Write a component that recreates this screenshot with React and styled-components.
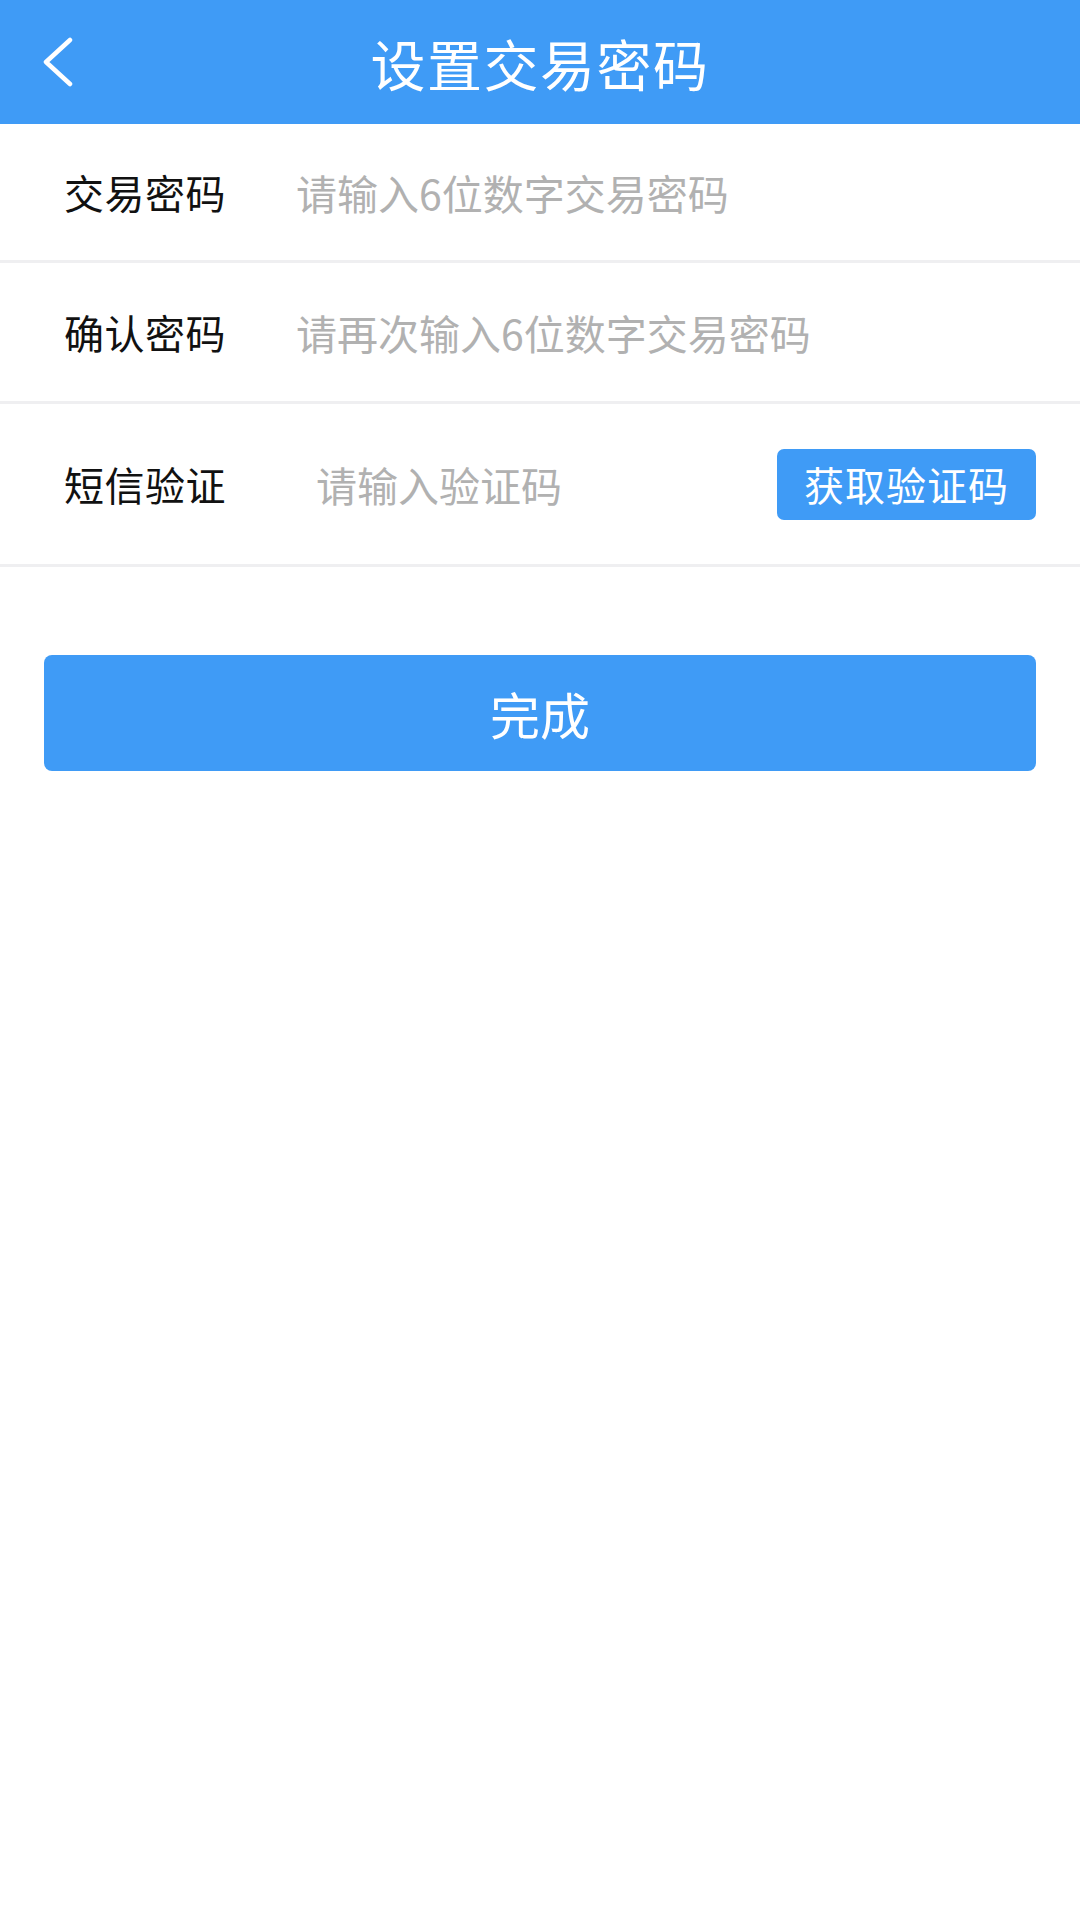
import React from "react";
import styled, { createGlobalStyle } from "styled-components";

const Global = createGlobalStyle`
  html, body { margin: 0; padding: 0; background: #ffffff; }
  body { font-family: "Noto Sans CJK SC", "Noto Sans", sans-serif; }
  * { box-sizing: border-box; }
`;

const Page = styled.div`
  width: 1080px;
  min-height: 1920px;
  background: #ffffff;
  display: flex;
  flex-direction: column;
`;

const Header = styled.header`
  height: 124px;
  background: #3f9bf6;
  display: grid;
  grid-template-columns: 1fr auto 1fr;
  align-items: center;
`;

const Back = styled.button`
  justify-self: start;
  margin-left: 38px;
  width: 40px;
  height: 56px;
  padding: 0;
  border: none;
  background: transparent;
  display: flex;
  align-items: center;
  justify-content: center;
`;

const Title = styled.h1`
  margin: 0;
  color: #ffffff;
  font-size: 55px;
  font-weight: 400;
  letter-spacing: 1.5px;
  line-height: 1;
`;

const Form = styled.div`
  display: flex;
  flex-direction: column;
`;

const Row = styled.div`
  height: ${(p) => p.$h}px;
  display: flex;
  align-items: center;
  padding: 0 44px 0 64px;
  border-bottom: 3px solid #efeff1;
`;

const Label = styled.span`
  width: 232px;
  flex: none;
  font-size: 40px;
  letter-spacing: 0.5px;
  color: #111111;
  line-height: 1;
`;

const Input = styled.input`
  flex: 1;
  min-width: 0;
  margin-left: ${(p) => p.$offset || 0}px;
  border: none;
  outline: none;
  background: transparent;
  padding: 0;
  font-family: "Noto Sans CJK SC", "Noto Sans", sans-serif;
  font-size: 41px;
  color: #111;
  &::placeholder {
    color: #b1b1b1;
  }
`;

const CodeButton = styled.button`
  flex: none;
  width: 259px;
  height: 71px;
  border: none;
  border-radius: 7px;
  background: #3f9bf6;
  color: #ffffff;
  font-family: "Noto Sans CJK SC", "Noto Sans", sans-serif;
  font-size: 40px;
  letter-spacing: 1px;
  padding: 0;
`;

const Submit = styled.button`
  margin: 88px 44px 0;
  height: 116px;
  border: none;
  border-radius: 8px;
  background: #3f9bf6;
  color: #ffffff;
  font-family: "Noto Sans CJK SC", "Noto Sans", sans-serif;
  font-size: 50px;
  padding: 0;
`;

export default function App() {
  return (
    <>
      <Global />
      <Page>
        <Header>
          <Back aria-label="返回">
            <svg width="36" height="50" viewBox="0 0 36 50">
              <path d="M30 3 L6 25 L30 47" fill="none" stroke="#ffffff" strokeWidth="4.5" strokeLinecap="round" strokeLinejoin="round" />
            </svg>
          </Back>
          <Title>设置交易密码</Title>
          <span />
        </Header>
        <Form>
          <Row $h={139}>
            <Label>交易密码</Label>
            <Input type="password" placeholder="请输入6位数字交易密码" />
          </Row>
          <Row $h={141}>
            <Label>确认密码</Label>
            <Input type="password" placeholder="请再次输入6位数字交易密码" />
          </Row>
          <Row $h={163}>
            <Label>短信验证</Label>
            <Input $offset={20} placeholder="请输入验证码" />
            <CodeButton>获取验证码</CodeButton>
          </Row>
        </Form>
        <Submit>完成</Submit>
      </Page>
    </>
  );
}
